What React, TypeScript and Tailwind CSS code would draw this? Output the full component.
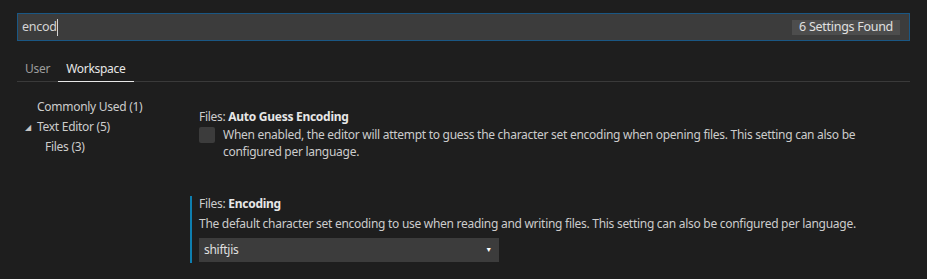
import React from 'react'

const font = { fontFamily: '"Noto Sans", "Open Sans", sans-serif' }

const TreeItem = ({ label, indent, open }: { label: string; indent: string; open?: boolean }) => (
    <div className={`flex items-center h-[20px] ${indent}`}>
        {open && <span className="text-[8px] text-[#c5c5c5] w-[12px] -ml-[12px] leading-none">◢</span>}
        <span>{label}</span>
    </div>
)

const App = () => {
    return (
        <div className="w-[927px] h-[279px] bg-[#1e1e1e] text-[#cccccc] text-[12px] tracking-[-0.28px] overflow-hidden px-[17px] pt-[13px]" style={font}>
            {/* search */}
            <div className="h-[28px] bg-[#3c3c3c] border border-[#1a5784] flex items-center justify-between pl-[4px] pr-[9px]">
                <div className="flex items-center text-[12.5px] text-[#d4d4d4]">
                    encod<span className="w-px h-[17px] bg-[#d4d4d4]"></span>
                </div>
                <div className="bg-[#4d4d4d] h-[15px] px-[7px] flex items-center text-[12.5px] text-[#e0e0e0]">6 Settings Found</div>
            </div>

            {/* tabs */}
            <div className="mt-[16px] flex border-b border-[#3a3a3a] h-[25px]">
                <div className="px-2 flex items-center text-[#9d9d9d]">User</div>
                <div className="px-2 flex items-center text-[#e7e7e7] border-b border-[#e7e7e7] -mb-px">Workspace</div>
            </div>

            <div className="flex">
                {/* tree */}
                <div className="w-[173px] pt-[15px]">
                    <TreeItem label="Commonly Used (1)" indent="pl-[20px]" />
                    <TreeItem label="Text Editor (5)" indent="pl-[20px]" open />
                    <TreeItem label="Files (3)" indent="pl-[28px]" />
                </div>

                {/* settings */}
                <div className="flex-1 pt-[26px]">
                    <div className="pl-[9px]">
                        <div className="h-[17px] flex items-center">
                            Files:&nbsp;<span className="font-bold text-[#e7e7e7]">Auto Guess Encoding</span>
                        </div>
                        <div className="flex mt-[1px]">
                            <div className="w-[16px] h-[16px] bg-[#3c3c3c] rounded-[2px] mt-[1px] shrink-0"></div>
                            <div className="ml-[8px] w-[645px] leading-[17px]">
                                When enabled, the editor will attempt to guess the character set encoding when opening files. This setting can also be configured per language.
                            </div>
                        </div>
                    </div>

                    <div className="mt-[36px] border-l-2 border-[#0e7fb0] pl-[7px] pt-[1px] pb-[1px]">
                        <div className="h-[14px] flex items-center">
                            Files:&nbsp;<span className="font-bold text-[#e7e7e7]">Encoding</span>
                        </div>
                        <div className="leading-[17px] mt-[4px]">
                            The default character set encoding to use when reading and writing files. This setting can also be configured per language.
                        </div>
                        <div className="mt-[6px] w-[300px] h-[24px] bg-[#3c3c3c] flex items-center justify-between pl-[5px] pr-[7px] text-[#e0e0e0]">
                            <span>shiftjis</span>
                            <span className="text-[7px] text-white">▼</span>
                        </div>
                    </div>
                </div>
            </div>
        </div>
    )
}

export default App
